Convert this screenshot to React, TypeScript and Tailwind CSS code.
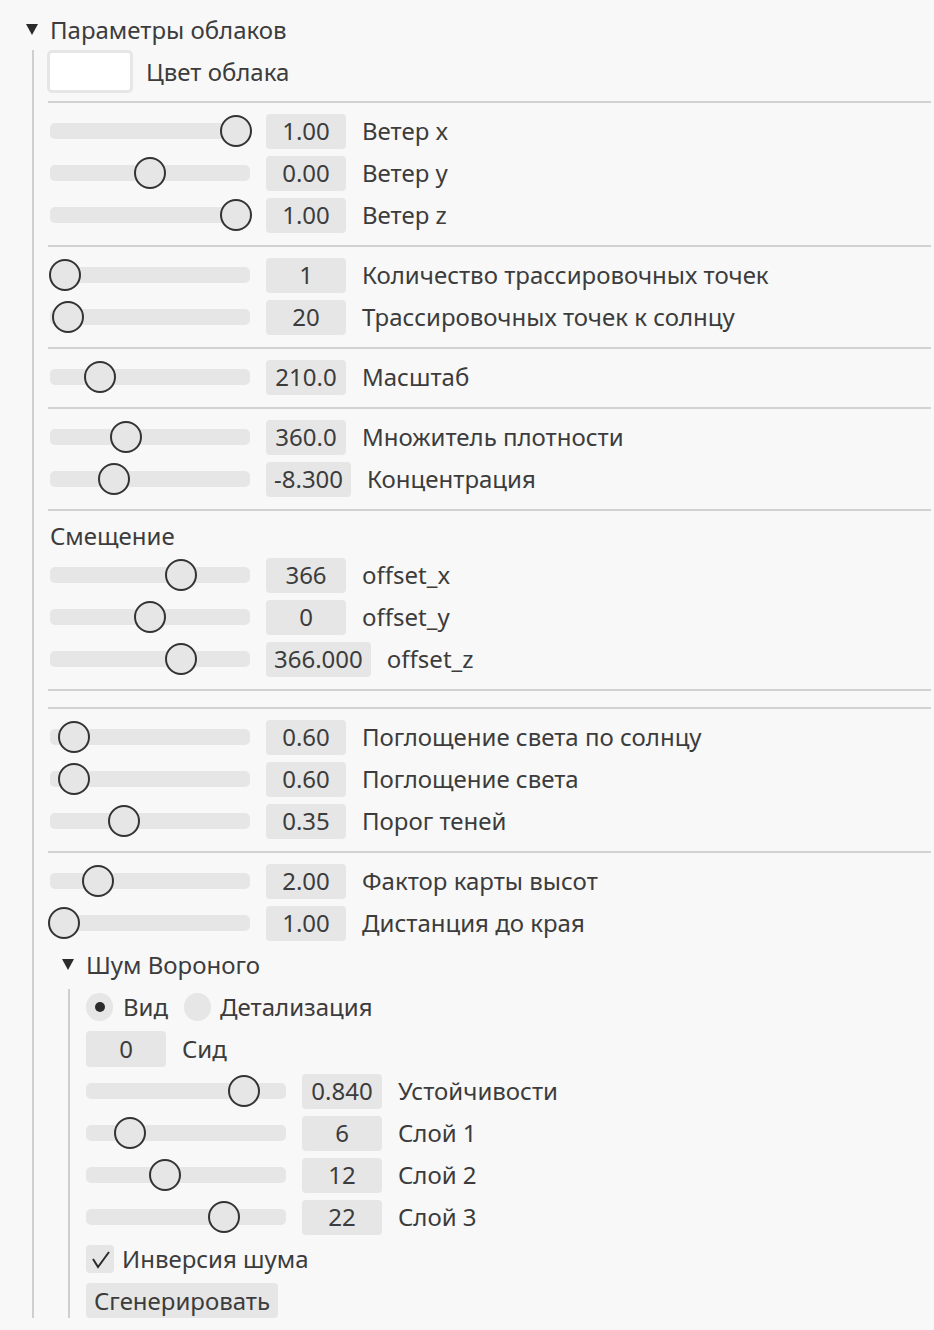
const font = { fontFamily: '"Noto Sans", "Open Sans", sans-serif' };

type SliderRowProps = { value: string; label: string; thumb: number };

// thumb = centre x of the knob, measured from the track's left edge
const SliderRow = ({ value, label, thumb }: SliderRowProps) => {
    return (
        <div className="flex h-[36px] items-center">
            <div className="relative h-[16px] w-[200px] rounded-[5px] bg-[#e6e6e6]">
                <div
                    className="absolute top-1/2 h-[32px] w-[32px] -translate-y-1/2 rounded-full border-2 border-[#333] bg-[#e6e6e6]"
                    style={{ left: thumb - 16 }}
                />
            </div>
            <div className="ml-[16px] flex h-[35px] min-w-[80px] items-center justify-center rounded-[4px] bg-[#e6e6e6] px-[8px]">
                {value}
            </div>
            <span className="ml-[16px]">{label}</span>
        </div>
    );
};

const Separator = ({ top = 6 }: { top?: number }) => {
    return (
        <div
            className={
                (top === 2 ? 'mt-[2px] ' : 'mt-[6px] ') +
                '-ml-[2px] mb-[4px] h-[2px] bg-[#d2d2d2]'
            }
        />
    );
};

const Triangle = () => (
    <svg width="24" height="36" viewBox="0 0 24 36" className="shrink-0">
        <polygon points="0,12 12,12 6,23" fill="#2b2b2b" />
    </svg>
);

const App = () => {
    return (
        <div className="min-h-[1330px] w-[934px] bg-[#f8f8f8] pt-[12px] text-[24px] text-[#3c3c3c]" style={font}>
            <div className="pl-[26px] pr-[3px]">
                <div className="flex h-[36px] items-center">
                    <Triangle />
                    <span>Параметры облаков</span>
                </div>

                <div className="ml-[6px] mt-[2px] flex flex-col gap-[6px] border-l-2 border-[#cfcfcf] pl-[16px]">
                    <div className="flex h-[43px] items-center">
                        <div className="-ml-[3px] h-[43px] w-[86px] rounded-[5px] border-[3px] border-[#e6e6e6] bg-white" />
                        <span className="ml-[13px]">Цвет облака</span>
                    </div>
                    <Separator top={2} />

                    <SliderRow value="1.00" label="Ветер x" thumb={186} />
                    <SliderRow value="0.00" label="Ветер y" thumb={100} />
                    <SliderRow value="1.00" label="Ветер z" thumb={186} />
                    <Separator />

                    <SliderRow value="1" label="Количество трассировочных точек" thumb={15} />
                    <SliderRow value="20" label="Трассировочных точек к солнцу" thumb={18} />
                    <Separator />

                    <SliderRow value="210.0" label="Масштаб" thumb={50} />
                    <Separator />

                    <SliderRow value="360.0" label="Множитель плотности" thumb={76} />
                    <SliderRow value="-8.300" label="Концентрация" thumb={64} />
                    <Separator />

                    <div className="flex h-[30px] items-center">Смещение</div>
                    <SliderRow value="366" label="offset_x" thumb={131} />
                    <SliderRow value="0" label="offset_y" thumb={100} />
                    <SliderRow value="366.000" label="offset_z" thumb={131} />
                    <Separator />
                    <Separator />

                    <SliderRow value="0.60" label="Поглощение света по солнцу" thumb={24} />
                    <SliderRow value="0.60" label="Поглощение света" thumb={24} />
                    <SliderRow value="0.35" label="Порог теней" thumb={74} />
                    <Separator />

                    <SliderRow value="2.00" label="Фактор карты высот" thumb={48} />
                    <SliderRow value="1.00" label="Дистанция до края" thumb={14} />

                    {/* nested tree node */}
                    <div className="flex h-[36px] items-center pl-[12px]">
                        <Triangle />
                        <span>Шум Вороного</span>
                    </div>
                    <div className="ml-[18px] flex flex-col gap-[6px] border-l-2 border-[#cfcfcf] pl-[16px]">
                        <div className="flex h-[36px] items-center">
                            <div className="flex h-[28px] w-[27px] items-center justify-center rounded-full bg-[#e6e6e6]">
                                <div className="h-[10px] w-[10px] rounded-full bg-[#2b2b2b]" />
                            </div>
                            <span className="ml-[10px]">Вид</span>
                            <div className="ml-[16px] h-[28px] w-[27px] rounded-full bg-[#e6e6e6]" />
                            <span className="ml-[9px]">Детализация</span>
                        </div>
                        <div className="flex h-[36px] items-center">
                            <div className="flex h-[36px] w-[80px] items-center justify-center rounded-[4px] bg-[#e6e6e6]">0</div>
                            <span className="ml-[16px]">Сид</span>
                        </div>
                        <SliderRow value="0.840" label="Устойчивости" thumb={158} />
                        <SliderRow value="6" label="Слой 1" thumb={44} />
                        <SliderRow value="12" label="Слой 2" thumb={79} />
                        <SliderRow value="22" label="Слой 3" thumb={138} />
                        <div className="flex h-[36px] items-center">
                            <div className="flex h-[28px] w-[28px] items-center justify-center rounded-[4px] bg-[#e6e6e6]">
                                <svg width="28" height="28" viewBox="0 0 28 28">
                                    <polyline points="7,14 12,22 23,7" fill="none" stroke="#2b2b2b" strokeWidth="2" />
                                </svg>
                            </div>
                            <span className="ml-[8px]">Инверсия шума</span>
                        </div>
                        <div className="flex">
                            <button className="flex h-[35px] items-center rounded-[4px] bg-[#e6e6e6] px-[8px]">
                                Сгенерировать
                            </button>
                        </div>
                    </div>
                </div>
            </div>
        </div>
    );
};

export default App;
